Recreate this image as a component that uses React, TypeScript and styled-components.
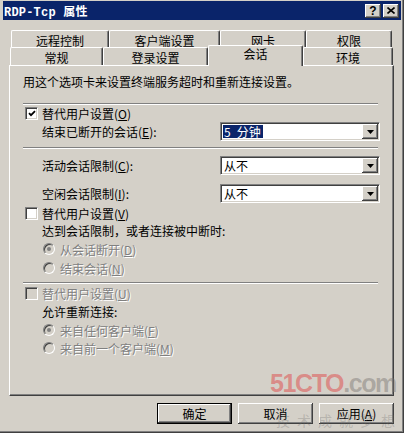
import React from "react";
import styled, { createGlobalStyle } from "styled-components";

const GlobalStyle = createGlobalStyle`
  html, body {
    margin: 0;
    padding: 0;
    background: #d4d0c8;
  }
  body {
    font-family: "Noto Sans CJK SC", "Liberation Sans", sans-serif;
    font-size: 12px;
    color: #000;
  }
`;

const raised = `
  box-shadow: inset -1px -1px #404040, inset 1px 1px #fff, inset -2px -2px #808080, inset 2px 2px #d4d0c8;
`;

const sunken = `
  border: 1px solid;
  border-color: #808080 #fff #fff #808080;
  box-shadow: inset 1px 1px #404040, inset -1px -1px #d4d0c8;
`;

const Window = styled.div`
  position: relative;
  width: 404px;
  height: 433px;
  box-sizing: border-box;
  background: #d4d0c8;
  padding: 1px 3px 0 3px;
  box-shadow: inset -1px -1px #404040, inset -2px -2px #808080;
  overflow: hidden;
`;

const TitleBar = styled.div`
  height: 19px;
  background: #0a246a;
  display: flex;
  align-items: center;
  padding: 0 2px 0 1px;
`;

const Title = styled.div`
  flex: 1;
  color: #fff;
  font: bold 12px "Liberation Mono", "Noto Sans CJK SC", monospace;
  letter-spacing: 0.2px;
`;

const TitleButton = styled.div`
  width: 16px;
  height: 14px;
  box-sizing: border-box;
  background: #d4d0c8;
  margin-left: 2px;
  display: flex;
  align-items: center;
  justify-content: center;
  font: bold 12px "Liberation Sans", sans-serif;
  line-height: 14px;
  ${raised}
`;

const Body = styled.div`
  padding: 10px 0 0 6px;
`;

const TabRow = styled.div<{ $h: number; $ml: number }>`
  display: flex;
  align-items: flex-start;
  height: ${(p) => p.$h}px;
  margin-left: ${(p) => p.$ml}px;
`;

const Tab = styled.div<{ $w: number; $active?: boolean }>`
  box-sizing: border-box;
  width: ${(p) => p.$w}px;
  height: ${(p) => (p.$active ? "21px" : "100%")};
  margin-top: ${(p) => (p.$active ? "-2px" : "0")};
  position: ${(p) => (p.$active ? "relative" : "static")};
  z-index: ${(p) => (p.$active ? 1 : "auto")};
  background: #d4d0c8;
  border-top: 1px solid #fff;
  border-left: 1px solid #fff;
  border-right: 1px solid #404040;
  box-shadow: inset -1px 0 #808080;
  border-radius: 2px 2px 0 0;
  text-align: center;
  padding-top: ${(p) => (p.$active ? "0" : "2px")};
  line-height: 15px;
  white-space: nowrap;
`;

const Panel = styled.div`
  box-sizing: border-box;
  width: 385px;
  height: 331px;
  border-top: 1px solid #fff;
  border-left: 1px solid #fff;
  border-right: 1px solid #404040;
  border-bottom: 1px solid #404040;
  box-shadow: inset -1px -1px #808080;
  padding: 6px 0 0 13px;
  display: flex;
  flex-direction: column;
`;

const Desc = styled.div`
  height: 20px;
  line-height: 20px;
  white-space: nowrap;
`;

const Separator = styled.div<{ $mt: number }>`
  margin-top: ${(p) => p.$mt}px;
  width: 355px;
  height: 0;
  border-top: 1px solid #808080;
  border-bottom: 1px solid #fff;
`;

const Text = styled.span<{ $disabled?: boolean }>`
  white-space: nowrap;
  color: ${(p) => (p.$disabled ? "#808080" : "#000")};
  text-shadow: ${(p) => (p.$disabled ? "1px 1px 0 #fff" : "none")};
`;

const Key = styled.span`
  text-decoration: underline;
`;

const CheckLine = styled.div<{ $mt: number }>`
  margin-top: ${(p) => p.$mt}px;
  height: 16px;
  display: flex;
  align-items: center;
  gap: 4px;
  padding-left: 2px;
`;

const CheckBox = styled.span<{ $disabled?: boolean }>`
  width: 13px;
  height: 13px;
  box-sizing: border-box;
  flex-shrink: 0;
  background: ${(p) => (p.$disabled ? "#d4d0c8" : "#fff")};
  display: flex;
  align-items: center;
  justify-content: center;
  ${sunken}
`;

const FieldLine = styled.div<{ $mt: number }>`
  margin-top: ${(p) => p.$mt}px;
  height: 19px;
  display: grid;
  grid-template-columns: 178px 160px;
  align-items: center;
  padding-left: 19px;
`;

const Combo = styled.div`
  width: 160px;
  height: 19px;
  box-sizing: border-box;
  background: #fff;
  padding: 1px;
  display: flex;
  align-items: center;
  justify-content: space-between;
  ${sunken}
`;

const ComboValue = styled.span<{ $selected?: boolean }>`
  margin-left: 1px;
  padding: 0 2px 0 1px;
  line-height: 13px;
  height: 13px;
  white-space: pre;
  background: ${(p) => (p.$selected ? "#0a246a" : "transparent")};
  color: ${(p) => (p.$selected ? "#fff" : "#000")};
`;

const ComboButton = styled.span`
  width: 16px;
  height: 15px;
  box-sizing: border-box;
  background: #d4d0c8;
  display: flex;
  align-items: center;
  justify-content: center;
  ${raised}
`;

const TextLine = styled.div<{ $mt: number }>`
  margin-top: ${(p) => p.$mt}px;
  height: 16px;
  line-height: 16px;
  padding-left: 19px;
`;

const RadioLine = styled.div<{ $mt: number }>`
  margin-top: ${(p) => p.$mt}px;
  height: 16px;
  display: flex;
  align-items: center;
  gap: 5px;
  padding-left: 20px;
`;

const Radio = styled.span<{ $checked?: boolean }>`
  width: 12px;
  height: 12px;
  box-sizing: border-box;
  flex-shrink: 0;
  border-radius: 50%;
  background: #d4d0c8;
  display: flex;
  align-items: center;
  justify-content: center;
  ${sunken}
  &::after {
    content: "";
    width: 4px;
    height: 4px;
    border-radius: 50%;
    background: #808080;
    display: ${(p) => (p.$checked ? "block" : "none")};
  }
`;

const ButtonRow = styled.div`
  width: 385px;
  margin-top: 7px;
  display: flex;
  justify-content: flex-end;
  gap: 6px;
`;

const Button = styled.div<{ $default?: boolean }>`
  width: 75px;
  height: 21px;
  box-sizing: border-box;
  background: #d4d0c8;
  display: flex;
  align-items: center;
  justify-content: center;
  line-height: 16px;
  border: ${(p) => (p.$default ? "1px solid #000" : "none")};
  ${raised}
`;

const Watermark = styled.div`
  position: absolute;
  left: 270px;
  top: 369px;
  pointer-events: none;
  display: flex;
  flex-direction: column;
`;

const Logo = styled.div`
  font: bold 25px "Liberation Sans", sans-serif;
  letter-spacing: -1.4px;
  line-height: 28px;
  white-space: nowrap;
`;

const LogoRed = styled.span`
  color: rgba(222, 80, 80, 0.55);
`;

const LogoGray = styled.span`
  color: rgba(120, 116, 112, 0.45);
`;

const Slogan = styled.div`
  margin: 16px 0 0 6px;
  font-size: 14px;
  line-height: 14px;
  letter-spacing: 7px;
  color: rgba(110, 110, 110, 0.3);
  white-space: nowrap;
`;

const Arrow = () => (
  <svg width="7" height="4" viewBox="0 0 7 4">
    <path d="M0 0h7L3.5 4z" fill="#000" />
  </svg>
);

const Tick = () => (
  <svg width="8" height="7" viewBox="0 0 8 7">
    <path d="M1 3.2 L3 5.2 L7 1.2" stroke="#000" strokeWidth="1.8" fill="none" />
  </svg>
);

const CloseMark = () => (
  <svg width="8" height="7" viewBox="0 0 8 7">
    <path d="M0.5 0.5 L7.5 6.5 M7.5 0.5 L0.5 6.5" stroke="#000" strokeWidth="1.6" />
  </svg>
);

export default function App() {
  return (
    <>
      <GlobalStyle />
      <Window>
        <TitleBar>
          <Title>RDP-Tcp 属性</Title>
          <TitleButton>?</TitleButton>
          <TitleButton>
            <CloseMark />
          </TitleButton>
        </TitleBar>
        <Body>
          <TabRow $h={17} $ml={2}>
            <Tab $w={98}>远程控制</Tab>
            <Tab $w={111}>客户端设置</Tab>
            <Tab $w={86}>网卡</Tab>
            <Tab $w={86}>权限</Tab>
          </TabRow>
          <TabRow $h={18} $ml={1}>
            <Tab $w={93}>常规</Tab>
            <Tab $w={105}>登录设置</Tab>
            <Tab $w={95} $active>
              会话
            </Tab>
            <Tab $w={90}>环境</Tab>
          </TabRow>
          <Panel>
            <Desc>用这个选项卡来设置终端服务超时和重新连接设置。</Desc>
            <Separator $mt={11} />
            <CheckLine $mt={0}>
              <CheckBox>
                <Tick />
              </CheckBox>
              <Text>
                替代用户设置(<Key>O</Key>)
              </Text>
            </CheckLine>
            <FieldLine $mt={1}>
              <Text>
                结束已断开的会话(<Key>E</Key>):
              </Text>
              <Combo>
                <ComboValue $selected>{"5\u2002分钟"}</ComboValue>
                <ComboButton>
                  <Arrow />
                </ComboButton>
              </Combo>
            </FieldLine>
            <Separator $mt={6} />
            <FieldLine $mt={7}>
              <Text>
                活动会话限制(<Key>C</Key>):
              </Text>
              <Combo>
                <ComboValue>从不</ComboValue>
                <ComboButton>
                  <Arrow />
                </ComboButton>
              </Combo>
            </FieldLine>
            <FieldLine $mt={9}>
              <Text>
                空闲会话限制(<Key>I</Key>):
              </Text>
              <Combo>
                <ComboValue>从不</ComboValue>
                <ComboButton>
                  <Arrow />
                </ComboButton>
              </Combo>
            </FieldLine>
            <CheckLine $mt={2}>
              <CheckBox />
              <Text>
                替代用户设置(<Key>V</Key>)
              </Text>
            </CheckLine>
            <TextLine $mt={2}>
              <Text>达到会话限制，或者连接被中断时:</Text>
            </TextLine>
            <RadioLine $mt={2}>
              <Radio $checked />
              <Text $disabled>
                从会话断开(<Key>D</Key>)
              </Text>
            </RadioLine>
            <RadioLine $mt={3}>
              <Radio />
              <Text $disabled>
                结束会话(<Key>N</Key>)
              </Text>
            </RadioLine>
            <Separator $mt={6} />
            <CheckLine $mt={1}>
              <CheckBox $disabled />
              <Text $disabled>
                替代用户设置(<Key>U</Key>)
              </Text>
            </CheckLine>
            <TextLine $mt={3}>
              <Text>允许重新连接:</Text>
            </TextLine>
            <RadioLine $mt={2}>
              <Radio $checked />
              <Text $disabled>
                来自任何客户端(<Key>F</Key>)
              </Text>
            </RadioLine>
            <RadioLine $mt={2}>
              <Radio />
              <Text $disabled>
                来自前一个客户端(<Key>M</Key>)
              </Text>
            </RadioLine>
          </Panel>
          <ButtonRow>
            <Button $default>确定</Button>
            <Button>取消</Button>
            <Button>
              应用(<Key>A</Key>)
            </Button>
          </ButtonRow>
        </Body>
        <Watermark>
          <Logo>
            <LogoRed>51CTO</LogoRed>
            <LogoGray>.com</LogoGray>
          </Logo>
          <Slogan>技术成就梦想</Slogan>
        </Watermark>
      </Window>
    </>
  );
}
